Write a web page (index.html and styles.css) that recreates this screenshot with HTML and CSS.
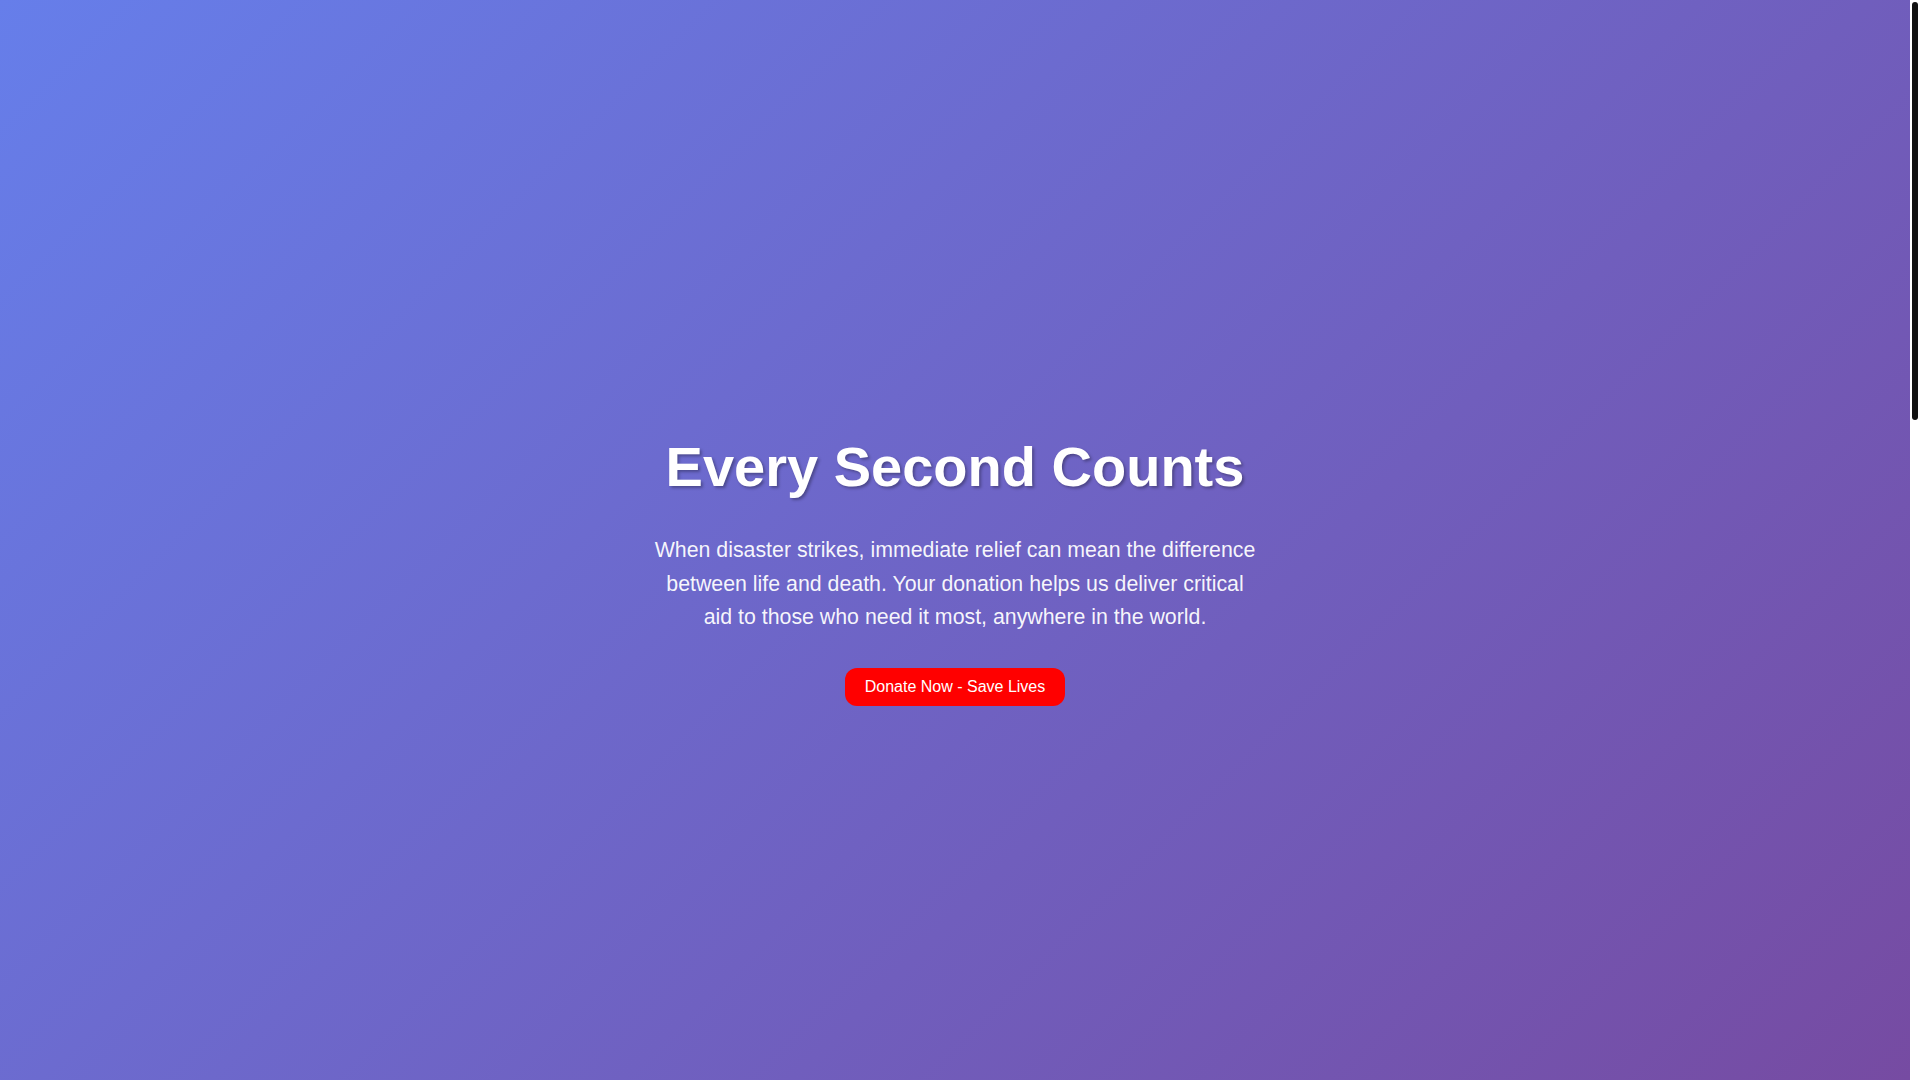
FILE: index.html
```html
<!DOCTYPE html>
<html lang="en">
<head>
<meta charset="UTF-8">
<title>Every Second Counts</title>
<link rel="stylesheet" href="styles.css">
</head>
<body>
  <div class="frame">
    <main class="page">
      <section class="hero">
        <div class="hero-content">
          <h1 class="hero-title">Every Second Counts</h1>
          <p class="hero-text">When disaster strikes, immediate relief can mean the difference between life and death. Your donation helps us deliver critical aid to those who need it most, anywhere in the world.</p>
          <a class="donate-btn" href="#donate">Donate Now - Save Lives</a>
        </div>
      </section>
    </main>
    <div class="scroll-rail" aria-hidden="true">
      <div class="scroll-thumb"></div>
    </div>
  </div>
</body>
</html>
```

FILE: styles.css
```css
html, body {
  margin: 0;
  padding: 0;
  height: 100%;
  overflow: hidden;
}

body {
  font-family: "Liberation Sans", Arial, sans-serif;
  background: #ffffff;
  color: #333333;
}

.frame {
  display: flex;
  height: 100vh;
}

.page {
  flex: 1;
  min-width: 0;
  overflow: hidden;
}

.scroll-rail {
  flex: 0 0 10px;
  box-sizing: border-box;
  padding: 2px;
  background: #ffffff;
}

.scroll-thumb {
  height: 418px;
  background: #111111;
  border-radius: 3px;
}

.hero {
  box-sizing: border-box;
  height: 100vh;
  padding-top: 60px;
  background: linear-gradient(135deg, #667eea 0%, #764ba2 100%);
  display: flex;
  align-items: center;
  justify-content: center;
  text-align: center;
  color: #ffffff;
}

.hero-content {
  display: flex;
  flex-direction: column;
  align-items: center;
}

.hero-title {
  margin: 0 0 35px;
  font-size: 56px;
  font-weight: bold;
  line-height: normal;
  text-shadow: 2px 2px 3px rgba(0, 0, 0, 0.3);
}

.hero-text {
  margin: 0 0 33px;
  max-width: 610px;
  font-size: 21.33px;
  line-height: 33.7px;
  color: rgba(255, 255, 255, 0.95);
}

.donate-btn {
  display: inline-block;
  padding: 10px 20px;
  font-size: 16px;
  line-height: normal;
  color: #ffffff;
  background: #ff0000;
  border-radius: 12px;
  text-decoration: none;
}
```
